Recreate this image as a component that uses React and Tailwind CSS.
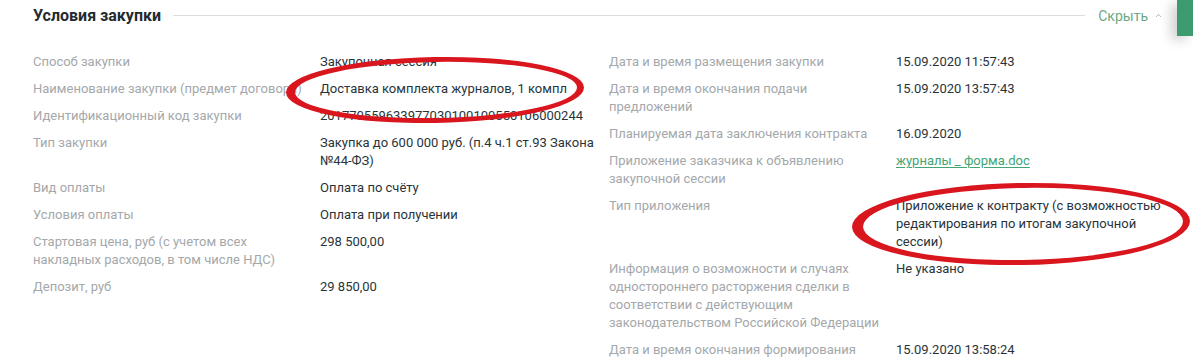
import { ChevronUp } from 'lucide-react';

const leftRows = [
  { label: ['Способ закупки'], value: ['Закупочная сессия'] },
  { label: ['Наименование закупки (предмет договора)'], value: ['Доставка комплекта журналов, 1 компл'], clip: true },
  { label: ['Идентификационный код закупки'], value: ['201770559633977030100100550106000244'] },
  { label: ['Тип закупки'], value: ['Закупка до 600 000 руб. (п.4 ч.1 ст.93 Закона', '№44-ФЗ)'] },
  { label: ['Вид оплаты'], value: ['Оплата по счёту'] },
  { label: ['Условия оплаты'], value: ['Оплата при получении'] },
  { label: ['Стартовая цена, руб (с учетом всех', 'накладных расходов, в том числе НДС)'], value: ['298 500,00'] },
  { label: ['Депозит, руб'], value: ['29 850,00'] },
];

const rightRows = [
  { label: ['Дата и время размещения закупки'], value: ['15.09.2020 11:57:43'] },
  { label: ['Дата и время окончания подачи', 'предложений'], value: ['15.09.2020 13:57:43'] },
  { label: ['Планируемая дата заключения контракта'], value: ['16.09.2020'] },
  { label: ['Приложение заказчика к объявлению', 'закупочной сессии'], value: ['журналы _ форма.doc'], link: true },
  { label: ['Тип приложения'], value: ['Приложение к контракту (с возможностью', 'редактирования по итогам закупочной', 'сессии)'] },
  {
    label: [
      'Информация о возможности и случаях',
      'одностороннего расторжения сделки в',
      'соответствии с действующим',
      'законодательством Российской Федерации',
    ],
    value: ['Не указано'],
  },
  { label: ['Дата и время окончания формирования'], value: ['15.09.2020 13:58:24'] },
];

function Row({ row }) {
  return (
    <div className="grid grid-cols-[287px_1fr]">
      <div className={row.clip ? 'overflow-hidden whitespace-nowrap pr-[2px]' : ''}>
        {row.label.map((line) => (
          <div key={line} className="whitespace-nowrap text-[#a4a8ab]">{line}</div>
        ))}
      </div>
      <div>
        {row.value.map((line) =>
          row.link ? (
            <a key={line} href="#" className="block whitespace-nowrap text-[#43a574] underline underline-offset-2">
              {line}
            </a>
          ) : (
            <div key={line} className="whitespace-nowrap text-[#28343a]">{line}</div>
          )
        )}
      </div>
    </div>
  );
}

function ringPath(cx, cy, rx, ry) {
  return `M ${cx - rx} ${cy} a ${rx} ${ry} 0 1 0 ${rx * 2} 0 a ${rx} ${ry} 0 1 0 ${-rx * 2} 0 Z`;
}

// red hand-drawn marks over the screenshot
function Marks() {
  return (
    <svg className="absolute inset-0 pointer-events-none" width="1193" height="361" viewBox="0 0 1193 361">
      <g transform="rotate(-1 435 90)">
        <path
          d={ringPath(435, 90, 149, 33) + ' ' + ringPath(436, 90, 141, 28)}
          fill="#d9151e"
          fillRule="evenodd"
        />
      </g>
      <g transform="rotate(-1 1021 224)">
        <path
          d={ringPath(1021, 224, 169, 41) + ' ' + ringPath(1023, 224, 160, 36)}
          fill="#d9151e"
          fillRule="evenodd"
        />
      </g>
    </svg>
  );
}

export default function App() {
  return (
    <div
      className="relative w-[1193px] h-[361px] overflow-hidden bg-white text-[13px] leading-[18px]"
      style={{ fontFamily: 'Roboto, "Noto Sans", sans-serif' }}
    >
      <div className="flex items-center h-[31px] pl-[33px] pr-[30px]">
        <h2 className="text-[16px] font-bold text-[#1f2b31] leading-none">Условия закупки</h2>
        <div className="flex-1 h-px bg-[#dcdcdc] ml-[12px] mr-[13px]" />
        <button className="flex items-center gap-[6px] text-[14px] text-[#6ea884]">
          Скрыть
          <ChevronUp className="w-[9px] h-[9px] text-[#8a9c90]" strokeWidth={2} />
        </button>
      </div>

      <div className="grid grid-cols-[576px_1fr] pl-[33px] pt-[22px]">
        <div className="flex flex-col gap-[9px]">
          {leftRows.map((row, i) => (
            <Row key={i} row={row} />
          ))}
        </div>
        <div className="flex flex-col gap-[9px]">
          {rightRows.map((row, i) => (
            <Row key={i} row={row} />
          ))}
        </div>
      </div>

      <div className="absolute right-0 top-0 w-[16px] h-[36px] bg-[#3c9b6f] shadow-[-6px_4px_12px_rgba(0,0,0,0.18)]" />

      <Marks />
    </div>
  );
}
